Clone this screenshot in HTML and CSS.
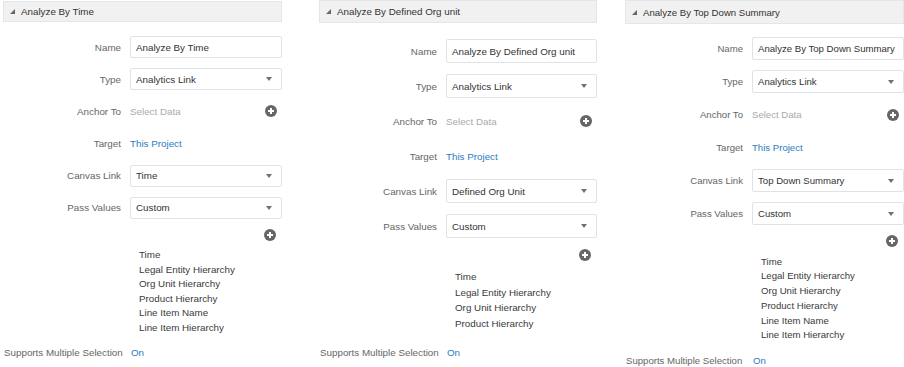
FILE: index.html
```html
<!DOCTYPE html>
<html lang="en">

<head>
    <meta charset="UTF-8">
    <meta name="viewport" content="width=device-width, initial-scale=1.0">
    <title>Analytics Links</title>
    <link rel="stylesheet" href="styles.css">
</head>

<body>
    <div class="panels">

        <!-- Analyze By Time -->
        <section class="panel panel-time">
            <div class="panel-head">
                <svg class="twisty" width="5" height="5" viewBox="0 0 5 5"><polygon points="5,0 5,5 0,5" /></svg>
                Analyze By Time
            </div>
            <div class="form">
                <span class="form-label">Name</span>
                <div class="field">Analyze By Time</div>
                <span class="form-label">Type</span>
                <div class="field select">Analytics Link<span class="caret"></span></div>
                <span class="form-label">Anchor To</span>
                <div class="anchor"><span class="placeholder">Select Data</span><span class="add"></span></div>
                <span class="form-label">Target</span>
                <a class="link">This Project</a>
                <span class="form-label">Canvas Link</span>
                <div class="field select">Time<span class="caret"></span></div>
                <span class="form-label">Pass Values</span>
                <div class="field select">Custom<span class="caret"></span></div>
            </div>
            <div class="add-row"><span class="add"></span></div>
            <ul class="values">
                <li>Time</li>
                <li>Legal Entity Hierarchy</li>
                <li>Org Unit Hierarchy</li>
                <li>Product Hierarchy</li>
                <li>Line Item Name</li>
                <li>Line Item Hierarchy</li>
            </ul>
            <div class="supports">
                <span>Supports Multiple Selection</span>
                <a class="link">On</a>
            </div>
        </section>

        <!-- Analyze By Defined Org unit -->
        <section class="panel panel-org">
            <div class="panel-head">
                <svg class="twisty" width="5" height="5" viewBox="0 0 5 5"><polygon points="5,0 5,5 0,5" /></svg>
                Analyze By Defined Org unit
            </div>
            <div class="form">
                <span class="form-label">Name</span>
                <div class="field">Analyze By Defined Org unit</div>
                <span class="form-label">Type</span>
                <div class="field select">Analytics Link<span class="caret"></span></div>
                <span class="form-label">Anchor To</span>
                <div class="anchor"><span class="placeholder">Select Data</span><span class="add"></span></div>
                <span class="form-label">Target</span>
                <a class="link">This Project</a>
                <span class="form-label">Canvas Link</span>
                <div class="field select">Defined Org Unit<span class="caret"></span></div>
                <span class="form-label">Pass Values</span>
                <div class="field select">Custom<span class="caret"></span></div>
            </div>
            <div class="add-row"><span class="add"></span></div>
            <ul class="values">
                <li>Time</li>
                <li>Legal Entity Hierarchy</li>
                <li>Org Unit Hierarchy</li>
                <li>Product Hierarchy</li>
            </ul>
            <div class="supports">
                <span>Supports Multiple Selection</span>
                <a class="link">On</a>
            </div>
        </section>

        <!-- Analyze By Top Down Summary -->
        <section class="panel panel-summary">
            <div class="panel-head">
                <svg class="twisty" width="5" height="5" viewBox="0 0 5 5"><polygon points="5,0 5,5 0,5" /></svg>
                Analyze By Top Down Summary
            </div>
            <div class="form">
                <span class="form-label">Name</span>
                <div class="field">Analyze By Top Down Summary</div>
                <span class="form-label">Type</span>
                <div class="field select">Analytics Link<span class="caret"></span></div>
                <span class="form-label">Anchor To</span>
                <div class="anchor"><span class="placeholder">Select Data</span><span class="add"></span></div>
                <span class="form-label">Target</span>
                <a class="link">This Project</a>
                <span class="form-label">Canvas Link</span>
                <div class="field select">Top Down Summary<span class="caret"></span></div>
                <span class="form-label">Pass Values</span>
                <div class="field select">Custom<span class="caret"></span></div>
            </div>
            <div class="add-row"><span class="add"></span></div>
            <ul class="values">
                <li>Time</li>
                <li>Legal Entity Hierarchy</li>
                <li>Org Unit Hierarchy</li>
                <li>Product Hierarchy</li>
                <li>Line Item Name</li>
                <li>Line Item Hierarchy</li>
            </ul>
            <div class="supports">
                <span>Supports Multiple Selection</span>
                <a class="link">On</a>
            </div>
        </section>

    </div>
</body>

</html>
```

FILE: styles.css
```css
body {
    margin: 0;
    background-color: #ffffff;
    color: #3a3a3a;
    font-family: 'Liberation Sans', Arial, sans-serif;
    font-size: 9.8px;
    overflow: hidden;
}

.panels {
    display: flex;
    align-items: flex-start;
    padding-left: 3px;
}

/* each screenshot panel has its own spacing */
.panel {
    width: 279px;
    flex-shrink: 0;
    --head-top: 0px;
    --head-h: 23px;
    --form-top: 14px;
    --row: 22px;
    --row-gap: 10px;
    --add-gap: 10px;
    --list-gap: 7px;
    --line: 14.6px;
    --sup-gap: 10px;
}

.panel-time {
    --head-top: 1px;
    --head-h: 21px;
    --form-top: 14px;
    --row: 22px;
    --row-gap: 10.2px;
    --add-gap: 10px;
    --list-gap: 7px;
    --line: 14.6px;
    --sup-gap: 10px;
}

.panel-org {
    margin-left: 37px;
    width: 278px;
    --head-h: 23px;
    --form-top: 16px;
    --row: 24px;
    --row-gap: 11px;
    --add-gap: 11px;
    --list-gap: 8px;
    --line: 15.7px;
    --sup-gap: 13px;
}

.panel-summary {
    margin-left: 28px;
    font-size: 9.6px;
    --head-h: 24px;
    --form-top: 13px;
    --row: 23px;
    --row-gap: 10px;
    --add-gap: 10px;
    --list-gap: 7.5px;
    --line: 14.8px;
    --sup-gap: 11px;
}

.panel-head {
    margin-top: var(--head-top);
    height: var(--head-h);
    box-sizing: border-box;
    display: flex;
    align-items: center;
    gap: 6px;
    padding-left: 6px;
    background-color: #f1f1f1;
    border: 1px solid #e4e6e8;
    color: #333333;
}

.twisty {
    fill: #666666;
    flex-shrink: 0;
}

.form {
    display: grid;
    grid-template-columns: 118px 1fr;
    column-gap: 9px;
    row-gap: var(--row-gap);
    grid-auto-rows: var(--row);
    margin-top: var(--form-top);
    align-items: center;
}

.form-label {
    text-align: right;
    color: #666666;
}

.field {
    height: 100%;
    box-sizing: border-box;
    display: flex;
    align-items: center;
    padding: 0 4px 0 5px;
    border: 1px solid #dfe3e6;
    border-radius: 2px;
    background-color: #ffffff;
    color: #333333;
    white-space: nowrap;
    overflow: hidden;
}

.select {
    justify-content: space-between;
    padding-right: 9px;
}

.caret {
    width: 0;
    height: 0;
    border-left: 3.5px solid transparent;
    border-right: 3.5px solid transparent;
    border-top: 4px solid #707070;
}

.anchor {
    display: flex;
    justify-content: space-between;
    align-items: center;
    padding-right: 5px;
}

.placeholder {
    color: #aaaaaa;
}

.link {
    color: #2a7cc1;
    text-decoration: none;
}

.add {
    width: 12px;
    height: 12px;
    border-radius: 50%;
    background-color: #666666;
    position: relative;
}

.add::before,
.add::after {
    content: '';
    position: absolute;
    background-color: #ffffff;
    left: 50%;
    top: 50%;
    transform: translate(-50%, -50%);
}

.add::before {
    width: 6px;
    height: 2px;
}

.add::after {
    width: 2px;
    height: 6px;
}

.add-row {
    display: flex;
    justify-content: flex-end;
    margin-top: var(--add-gap);
    padding-right: 6px;
}

.values {
    list-style: none;
    margin: var(--list-gap) 0 0 136px;
    padding: 0;
    line-height: var(--line);
}

.supports {
    display: grid;
    grid-template-columns: 118px 1fr;
    column-gap: 9px;
    margin-top: var(--sup-gap);
    line-height: var(--line);
    padding-left: 1px;
    color: #666666;
    white-space: nowrap;
}
```
